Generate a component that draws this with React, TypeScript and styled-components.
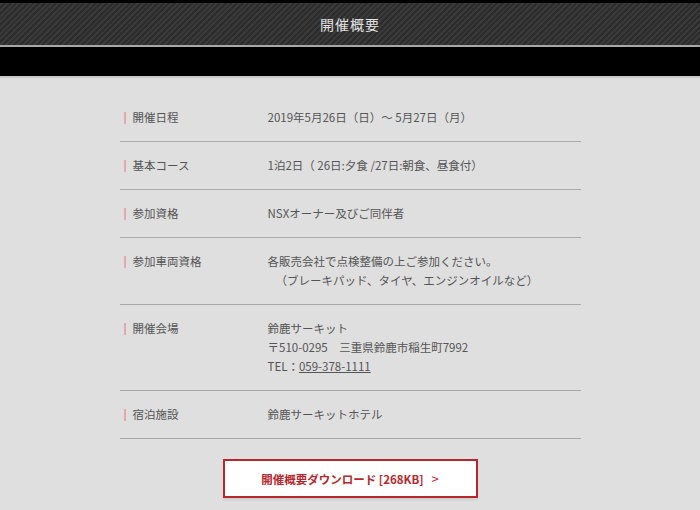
import React from 'react';
import styled, { createGlobalStyle } from 'styled-components';

const GlobalStyle = createGlobalStyle`
  html, body {
    margin: 0;
    padding: 0;
    background: #dfdfdf;
  }
  body {
    font-family: "Noto Sans CJK JP", "Noto Sans", sans-serif;
    color: #333;
  }
`;

const Page = styled.div`
  width: 700px;
  min-height: 510px;
  background: #dfdfdf;
`;

const TopBar = styled.div`
  height: 3px;
  background: #000;
`;

const Header = styled.h1`
  margin: 0;
  height: 42px;
  display: flex;
  align-items: center;
  justify-content: center;
  font-size: 14px;
  font-weight: normal;
  letter-spacing: 1px;
  color: #e2e2e2;
  background: repeating-linear-gradient(
    -45deg,
    #2c2c2c 0px,
    #2c2c2c 2px,
    #3a3a3a 2px,
    #3a3a3a 4px
  );
  border-bottom: 2px solid #a8a8a8;
`;

const BlackBand = styled.div`
  height: 29px;
  background: #000;
  border-bottom: 2px solid #c9c9c9;
`;

const Content = styled.main`
  padding: 16px 0 12px;
  display: flex;
  flex-direction: column;
  align-items: center;
`;

const Table = styled.dl`
  margin: 0;
  width: 461px;
`;

const Row = styled.div`
  display: flex;
  padding: 14px 0;
  border-bottom: 1px solid #a9a9a9;
  font-size: 11.5px;
  line-height: 19px;
`;

const Label = styled.dt`
  flex: 0 0 144px;
  margin: 0;
  padding-left: 4px;
  color: #555;
  display: flex;
  align-items: flex-start;

  &::before {
    content: '';
    width: 2px;
    height: 12px;
    margin-top: 4px;
    margin-right: 7px;
    background: #e2a9ad;
  }
`;

const Value = styled.dd`
  margin: 0;
  color: #555;
`;

const Indent = styled.span`
  display: block;
  padding-left: 8px;
`;

const TelLink = styled.a`
  color: #555;
  text-decoration: underline;
`;

const DownloadButton = styled.a`
  margin-top: 20px;
  width: 251px;
  height: 35px;
  display: flex;
  align-items: center;
  justify-content: center;
  gap: 8px;
  background: #fff;
  border: 2px solid #b8262c;
  color: #b8262c;
  font-size: 11.5px;
  font-weight: bold;
  text-decoration: none;
  box-shadow: 0 2px 2px rgba(0, 0, 0, 0.08);
`;

const Arrow = styled.span`
  font-weight: normal;
  font-size: 13px;
`;

const rows: { label: string; value: React.ReactNode }[] = [
  { label: '開催日程', value: '2019年5月26日（日）～ 5月27日（月）' },
  { label: '基本コース', value: '1泊2日（ 26日:夕食 /27日:朝食、昼食付）' },
  { label: '参加資格', value: 'NSXオーナー及びご同伴者' },
  {
    label: '参加車両資格',
    value: (
      <>
        各販売会社で点検整備の上ご参加ください。
        <Indent>（ブレーキパッド、タイヤ、エンジンオイルなど）</Indent>
      </>
    ),
  },
  {
    label: '開催会場',
    value: (
      <>
        鈴鹿サーキット
        <br />
        〒510-0295　三重県鈴鹿市稲生町7992
        <br />
        TEL：<TelLink href="#">059-378-1111</TelLink>
      </>
    ),
  },
  { label: '宿泊施設', value: '鈴鹿サーキットホテル' },
];

export default function App() {
  return (
    <Page>
      <GlobalStyle />
      <TopBar />
      <Header>開催概要</Header>
      <BlackBand />
      <Content>
        <Table>
          {rows.map((row) => (
            <Row key={row.label}>
              <Label>{row.label}</Label>
              <Value>{row.value}</Value>
            </Row>
          ))}
        </Table>
        <DownloadButton href="#">
          開催概要ダウンロード [268KB]
          <Arrow>&gt;</Arrow>
        </DownloadButton>
      </Content>
    </Page>
  );
}
